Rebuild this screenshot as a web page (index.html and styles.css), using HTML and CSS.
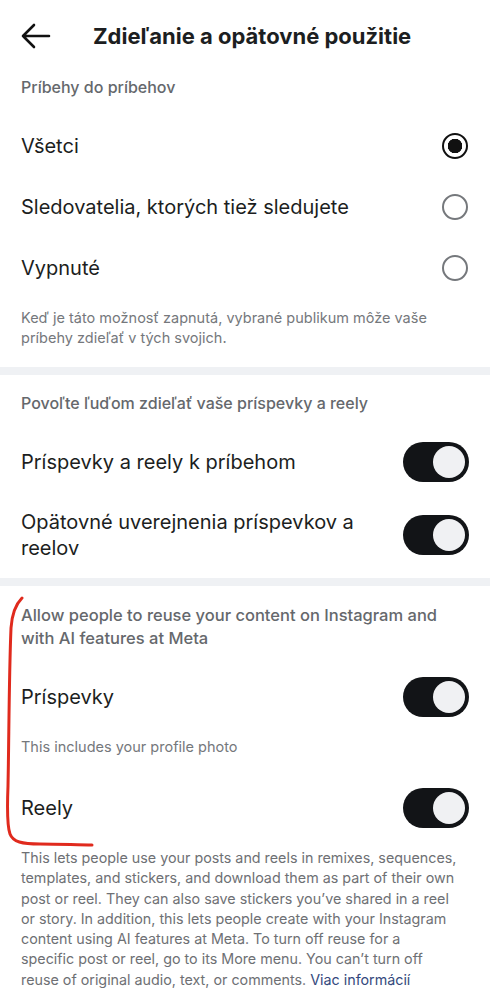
FILE: index.html
```html
<!DOCTYPE html>
<html lang="sk">
<head>
    <meta charset="UTF-8">
    <title>Zdieľanie a opätovné použitie</title>
    <link rel="stylesheet" href="styles.css">
</head>
<body>
    <div class="page">
        <header class="topbar">
            <svg class="back" width="32" height="26" viewBox="0 0 32 26">
                <path d="M29 13H3M14 2L3 13l11 11" fill="none" stroke="#111" stroke-width="2.6" stroke-linecap="round" stroke-linejoin="round"/>
            </svg>
            <h1>Zdieľanie a opätovné použitie</h1>
        </header>

        <section class="group">
            <h2 class="group_title">Príbehy do príbehov</h2>
            <div class="row">
                <span>Všetci</span>
                <span class="radio checked"></span>
            </div>
            <div class="row">
                <span>Sledovatelia, ktorých tiež sledujete</span>
                <span class="radio"></span>
            </div>
            <div class="row">
                <span>Vypnuté</span>
                <span class="radio"></span>
            </div>
            <p class="hint hint_last">Keď je táto možnosť zapnutá, vybrané publikum môže vaše príbehy zdieľať v tých svojich.</p>
        </section>

        <div class="band"></div>

        <section class="group">
            <h2 class="group_title">Povoľte ľuďom zdieľať vaše príspevky a reely</h2>
            <div class="row">
                <span>Príspevky a reely k príbehom</span>
                <span class="toggle"></span>
            </div>
            <div class="row row_tall">
                <span class="label_wrap">Opätovné uverejnenia príspevkov a reelov</span>
                <span class="toggle"></span>
            </div>
        </section>

        <div class="band"></div>

        <section class="group marked">
            <h2 class="group_title wide">Allow people to reuse your content on Instagram and with AI features at Meta</h2>
            <div class="row">
                <span>Príspevky</span>
                <span class="toggle"></span>
            </div>
            <p class="hint hint_mid">This includes your profile photo</p>
            <div class="row">
                <span>Reely</span>
                <span class="toggle"></span>
            </div>
            <p class="note">This lets people use your posts and reels in remixes, sequences, templates, and stickers, and download them as part of their own post or reel. They can also save stickers you’ve shared in a reel or story. In addition, this lets people create with your Instagram content using AI features at Meta. To turn off reuse for a<br>specific post or reel, go to its More menu. You can’t turn off reuse of original audio, text, or comments. <a href="javascript:void(0);">Viac informácií</a></p>

            <!-- red pen mark over the screenshot -->
            <svg class="scribble" width="100" height="260" viewBox="0 0 100 260">
                <path d="M22 2C16 8 12 18 11 32C9 80 9 140 8 190C7 215 7 230 10 238C13 246 22 248 40 248C60 248 78 249 92 249" fill="none" stroke="#e02a1d" stroke-width="3" stroke-linecap="round"/>
            </svg>
        </section>
    </div>
</body>
</html>
```

FILE: styles.css
```css
*{
    margin:0;
    padding:0;
    box-sizing: border-box;
}
body{
    background: #fff;
    font-family: Inter, Roboto, "Noto Sans", "Liberation Sans", sans-serif;
    color: #1c1e21;
}
a{
    text-decoration: none;
    color: #34497d;
}
.page{
    width: 490px;
}
.topbar{
    height: 72px;
    display: flex;
    align-items: center;
    padding-left: 20px;
}
.topbar h1{
    font-size: 22px;
    font-weight: 700;
    color: #1c1e21;
    margin-left: 41px;
}
.group{
    padding: 0 21px;
    position: relative;
}
.group_title{
    font-size: 16px;
    font-weight: 500;
    color: #65686c;
    line-height: 20px;
    padding: 5px 0 18px;
}
.band + .group .group_title{
    padding-top: 18px;
}
.group_title.wide{
    font-size: 16.5px;
    line-height: 23px;
    padding-top: 16px;
    padding-bottom: 16px;
}
.row{
    height: 61px;
    display: flex;
    align-items: center;
    justify-content: space-between;
    font-size: 20px;
    line-height: 26px;
}
.row_tall{
    height: 86px;
}
.label_wrap{
    width: 350px;
}
.radio{
    width: 26px;
    height: 26px;
    border-radius: 50%;
    border: 2px solid #75787c;
    margin-right: 1px;
}
.radio.checked{
    border: 2.5px solid #111;
    background: radial-gradient(circle, #111 0 7px, #fff 7.5px);
}
.toggle{
    width: 66px;
    height: 40px;
    border-radius: 20px;
    background: #121417;
    position: relative;
    flex-shrink: 0;
}
.toggle::after{
    content: "";
    position: absolute;
    right: 4px;
    top: 4px;
    width: 32px;
    height: 32px;
    border-radius: 50%;
    background: #f0f1f3;
}
.hint{
    font-size: 14.5px;
    line-height: 20px;
    color: #75787c;
    padding: 10px 0;
}
.hint_last{
    padding-bottom: 19px;
}
.hint_mid{
    padding-bottom: 20px;
}
.band{
    height: 8px;
    background: #eff1f4;
}
.note{
    width: 439px;
    font-size: 14.3px;
    line-height: 20.3px;
    color: #6e7074;
    padding: 10px 0 20px;
}
.scribble{
    position: absolute;
    left: 0;
    top: 10px;
}
```
